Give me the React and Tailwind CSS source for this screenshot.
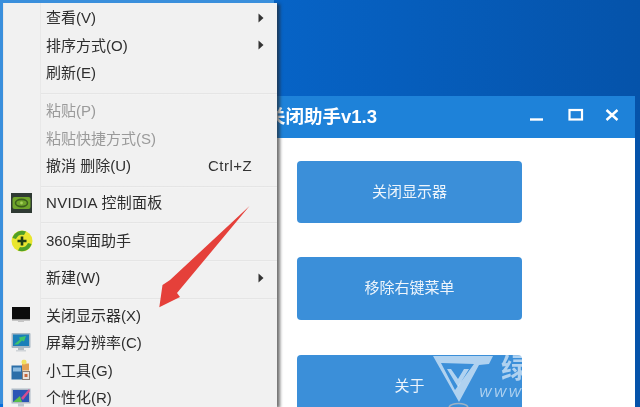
import React from "react";

const font = { fontFamily: '"Liberation Sans", "Noto Sans CJK SC", sans-serif' };

function Arrow() {
  return (
    <svg width="10" height="10" viewBox="0 0 10 10" className="absolute right-[11px] top-1/2 -translate-y-1/2">
      <path d="M2.5 0.5 L7.5 5 L2.5 9.5 Z" fill="#333" />
    </svg>
  );
}

function Row({ children, sub, hint, icon, disabled, className = "" }) {
  return (
    <div className={`relative flex h-[27.5px] shrink-0 items-center pl-[42px] text-[15px] leading-none ${disabled ? "text-[#9a9a9a]" : "text-[#2e2e2e]"} ${className}`}>
      {icon && <div className="absolute left-[7px] top-1/2 -translate-y-1/2">{icon}</div>}
      <span>{children}</span>
      {hint && <span className="absolute left-[204px] tracking-[0.5px] text-[#333]">{hint}</span>}
      {sub && <Arrow />}
    </div>
  );
}

function Sep({ className }) {
  return <div className={`ml-[36px] h-[2px] shrink-0 bg-gradient-to-b from-[#dedede] to-[#fafafa] ${className}`} />;
}

function Nvidia() {
  return (
    <svg width="21" height="20" viewBox="0 0 21 20">
      <rect width="21" height="20" fill="#2f3a33" />
      <rect x="1.5" y="4" width="18" height="12" rx="2" fill="#6fa52a" />
      <ellipse cx="10.5" cy="10" rx="6" ry="3.6" fill="none" stroke="#3c5f1c" strokeWidth="1.6" />
      <circle cx="10.5" cy="10" r="1.4" fill="#a6d25a" />
    </svg>
  );
}

function Icon360() {
  return (
    <svg width="22" height="22" viewBox="0 0 22 22">
      <circle cx="11" cy="11" r="10.5" fill="#e9e62f" />
      <path d="M1.5 8 A10 10 0 0 1 15 1.5 L13 5 A7 7 0 0 0 5 9 Z" fill="#4fa028" />
      <path d="M20.5 14 A10 10 0 0 1 7 20.5 L9 17 A7 7 0 0 0 17 13 Z" fill="#4fa028" />
      <path d="M11 6.5 V15.5 M6.5 11 H15.5" stroke="#1f3d16" strokeWidth="2.6" />
    </svg>
  );
}

function Screen() {
  return (
    <svg width="20" height="18" viewBox="0 0 20 18">
      <rect x="1" y="1" width="18" height="12" fill="#0c0c0c" />
      <rect x="1" y="13" width="18" height="1.5" fill="#9a9a9a" />
      <rect x="7" y="14.5" width="6" height="1.5" fill="#c5c5c5" />
    </svg>
  );
}

function Resolution() {
  return (
    <svg width="20" height="21" viewBox="0 0 20 21">
      <rect x="0.5" y="0.5" width="19" height="15" rx="1" fill="#a9b8c4" />
      <rect x="2" y="2" width="16" height="11.5" fill="#1b7fb9" />
      <path d="M3 12 L9 7 L8 5 L15 3.5 L13 9 L11 8 L7 12 Z" fill="#3fc46b" />
      <rect x="7" y="15.5" width="6" height="2" fill="#b4bcc2" />
      <rect x="5" y="17.5" width="10" height="1.5" fill="#cfd4d8" />
    </svg>
  );
}

function Gadgets() {
  return (
    <svg width="20" height="21" viewBox="0 0 20 21">
      <rect x="0.5" y="6" width="11" height="14" fill="#2c6ea8" />
      <rect x="2" y="8" width="8" height="4" fill="#8cbbe0" />
      <rect x="11" y="4" width="7" height="7" fill="#e3a152" />
      <circle cx="13" cy="2.5" r="2.5" fill="#f1e05e" />
      <rect x="11.5" y="12" width="7" height="8" fill="#e8e4de" stroke="#8b7f76" />
      <rect x="13.5" y="14.5" width="3" height="3" fill="#c9683c" />
    </svg>
  );
}

function Personal() {
  return (
    <svg width="20" height="20" viewBox="0 0 20 20">
      <rect x="0.5" y="0.5" width="19" height="15" fill="#aebac6" />
      <rect x="2" y="2" width="16" height="12" fill="#2b55b5" />
      <path d="M2 14 L9 8 L11 14 Z" fill="#5cc04a" />
      <path d="M10 10 L18 1 L19 3 L12 12 Z" fill="#d64d8f" />
      <rect x="7" y="15.5" width="6" height="3" fill="#bfc6cc" />
    </svg>
  );
}

function ContextMenu() {
  return (
    <div className="absolute left-[3px] top-[3px] flex h-[404px] w-[274px] flex-col border-l border-[#e8e8e8] bg-[#f1f1f1] pt-[0.75px] shadow-[-3px_-3px_0_#3a8fdc,3px_1px_3px_rgba(40,40,40,0.65)]">
      <div className="absolute bottom-0 left-[36px] top-0 w-px bg-[#e8e8e8]" />
      <Row sub>查看(V)</Row>
      <Row sub>排序方式(O)</Row>
      <Row>刷新(E)</Row>
      <Sep className="mt-[6.5px] mb-[2px]" />
      <Row disabled>粘贴(P)</Row>
      <Row disabled>粘贴快捷方式(S)</Row>
      <Row hint="Ctrl+Z">撤消 删除(U)</Row>
      <Sep className="mt-[6.5px] mb-[1px]" />
      <Row icon={<Nvidia />} className="tracking-[0.3px]">NVIDIA 控制面板</Row>
      <Sep className="mt-[5.5px] mb-[3px]" />
      <Row icon={<Icon360 />}>360桌面助手</Row>
      <Sep className="mt-[5.5px] mb-[2px]" />
      <Row sub>新建(W)</Row>
      <Sep className="mt-[6.5px] mb-[1.5px]" />
      <Row icon={<Screen />}>关闭显示器(X)</Row>
      <Row icon={<Resolution />}>屏幕分辨率(C)</Row>
      <Row icon={<Gadgets />}>小工具(G)</Row>
      <Row icon={<Personal />}>个性化(R)</Row>
    </div>
  );
}

function RedArrow() {
  return (
    <svg width="110" height="120" viewBox="0 0 110 120" className="absolute left-[150px] top-[200px]">
      <path d="M99.5 6 L20 80 L12.5 85 L9.3 107.3 L30 97 L27 93 Z" fill="#e5403a" />
    </svg>
  );
}

function Btn({ children, className = "" }) {
  return (
    <div className={`flex w-[225px] shrink-0 items-center justify-center rounded-[4px] bg-[#3b8fd9] text-[15px] text-[#eef5fc] ${className}`}>
      {children}
    </div>
  );
}

function Watermark() {
  return (
    <div className="absolute left-[433px] top-[356px] h-[51px] w-[92px] text-white/60">
      <svg width="62" height="51" viewBox="0 0 62 51" className="absolute left-0 top-0">
        <path d="M0 0 H60 L56 8 L46 9 L26 46 Z M8 7 L22 34 L41 8 Z" fill="#fff" fillOpacity="0.6" fillRule="evenodd" />
        <path d="M14 13 H18 L25 23 L31 13 H36 L25 31 Z" fill="#fff" fillOpacity="0.6" />
        <path d="M16 51 A10 5 0 0 1 35 51" fill="none" stroke="#9fb2c4" strokeWidth="1.5" />
      </svg>
      <span className="absolute left-[68px] top-[-2px] text-[27px] font-bold leading-[30px]">绿</span>
      <span className="absolute left-[46px] top-[29px] text-[13px] italic leading-[16px] tracking-[2.5px]">WWW.</span>
    </div>
  );
}

export default function App() {
  return (
    <div style={font} className="relative h-[407px] w-[640px] overflow-hidden bg-gradient-to-r from-[#0870dc] to-[#0553aa] blur-[0.4px]">
      <div className="pl-[258px] pt-[96px]">
        <div className="w-[377px]">
          <div className="flex h-[42px] items-center bg-[#1e82d9] pl-[9px] text-white">
            <span className="text-[18.5px] font-bold">关闭助手v1.3</span>
            <div className="ml-auto flex items-center">
              <svg width="100" height="22" viewBox="0 0 100 22" className="mb-[8px] mr-[9px]">
                <path d="M4 17.5 H17" stroke="#fff" strokeWidth="2.4" />
                <rect x="43.5" y="8" width="12.5" height="9.5" fill="none" stroke="#fff" strokeWidth="2.2" />
                <path d="M80.5 8 L91.5 18 M91.5 8 L80.5 18" stroke="#fff" strokeWidth="2.4" />
              </svg>
            </div>
          </div>
          <div className="flex h-[300px] flex-col gap-[34px] bg-white pl-[39px] pt-[23px]">
            <Btn className="h-[62px]">关闭显示器</Btn>
            <Btn className="h-[63px]">移除右键菜单</Btn>
            <Btn className="mt-[1px] h-[63px]">关于</Btn>
          </div>
        </div>
      </div>
      <Watermark />
      <ContextMenu />
      <RedArrow />
    </div>
  );
}
